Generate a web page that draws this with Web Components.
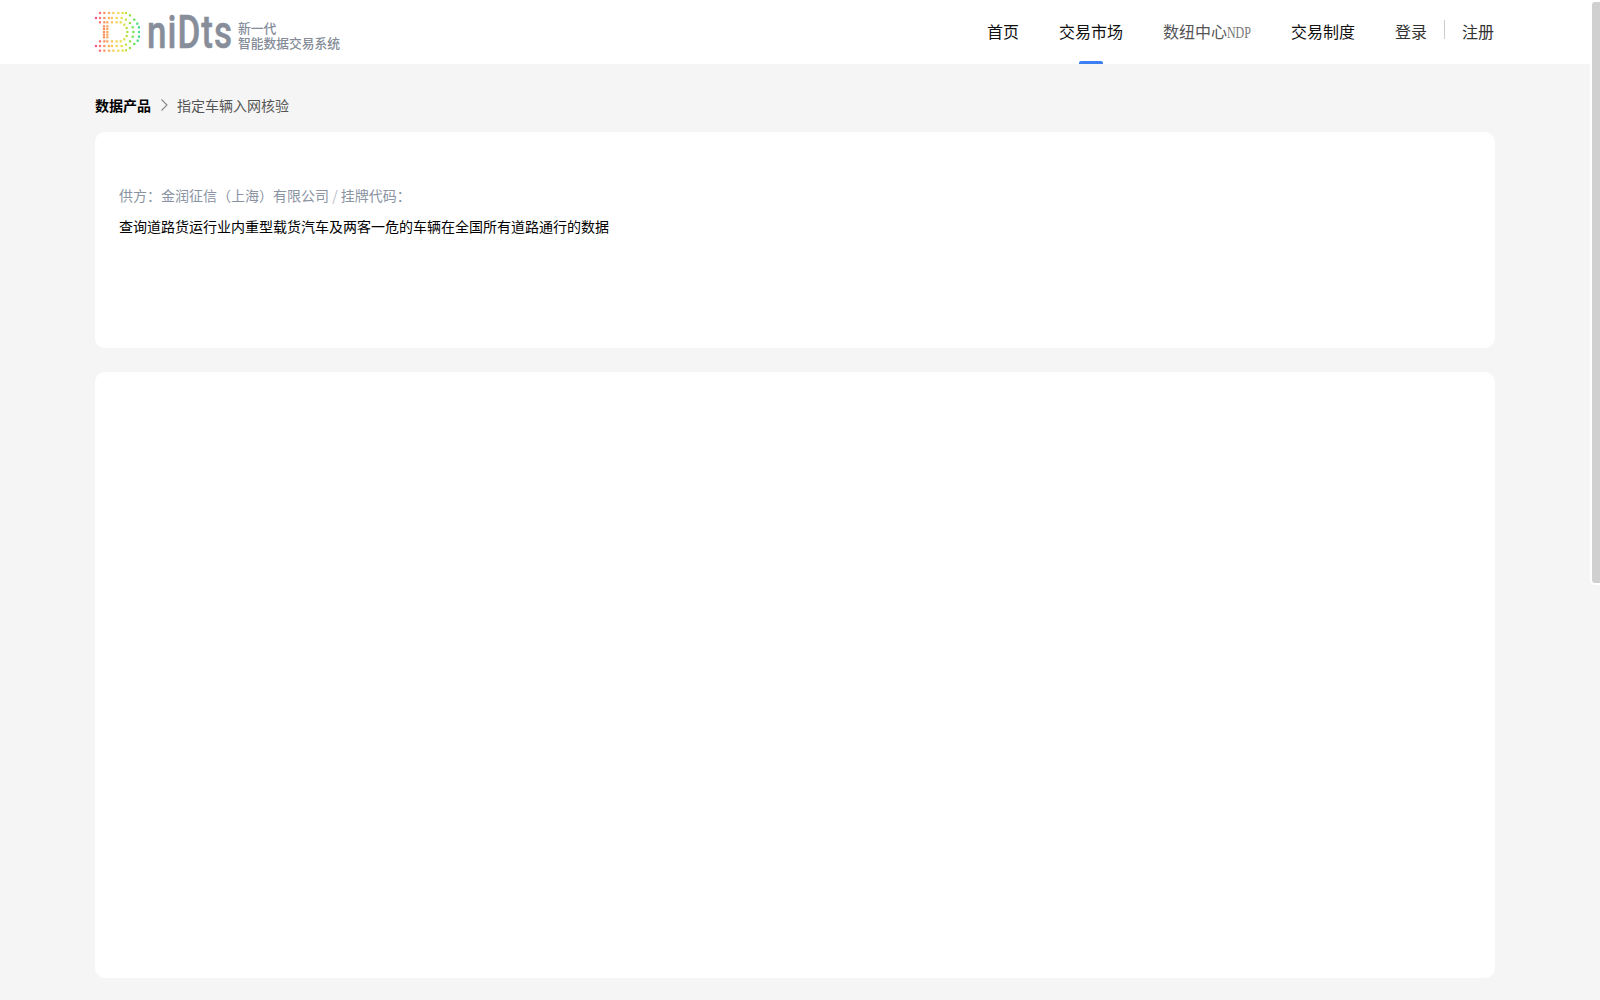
<!DOCTYPE html>
<html lang="zh-CN"><head><meta charset="utf-8"><title>指定车辆入网核验</title>
<style>
html,body{margin:0;padding:0;height:100%;overflow:hidden}
body{background:#f5f5f5;font-family:"Noto Sans CJK SC","Liberation Sans",sans-serif}
</style></head><body>
<app-page>
  <site-header slot="header"></site-header>
  <bread-crumb><span slot="root">数据产品</span>指定车辆入网核验</bread-crumb>
  <info-card style="height:216px">
    <product-summary></product-summary>
  </info-card>
  <info-card style="height:606px"></info-card>
</app-page>
<page-scrollbar></page-scrollbar>
<script>
const def=(name,html,extra={})=>{
  customElements.define(name,class extends HTMLElement{
    constructor(){super();this.attachShadow({mode:'open'}).innerHTML=html;extra.init&&extra.init(this.shadowRoot)}
  });
};
def('app-page',`<style>
:host{display:block;height:1000px;overflow:hidden}
main{width:1400px;margin:0 auto;display:flex;flex-direction:column}
.wrap{padding-right:10px}
</style><slot name="header"></slot><div class="wrap"><main><slot></slot></main></div>`);

def('dot-logo',`<style>:host{display:block;width:50px;height:48px}svg{display:block}</style><svg width="50" height="48" viewBox="0 0 50 48"></svg>`,{init(r){
  const P=[];
  const add=(a)=>a.forEach(p=>P.push(p));
  const row=(xs,y)=>xs.forEach(x=>P.push([x,y]));
  row([30,43,57,70,85,98],15);row([30,43,57,70,85,98],128);
  add([[108,15],[120,22],[133,35],[142,47],[147,58],[148,72],[147,86],[143,98],[133,108],[120,120],[108,127]]);
  row([18,30,43,57,66,80,95],30);row([18,30,43,57,66,80,95],114);
  add([[108,35],[120,45],[128,58],[130,72],[128,86],[120,100],[108,110]]);
  row([30,43,52,66,80,92],43);row([30,43,52,66,80,92],100);
  add([[103,50],[110,60],[112,72],[110,84],[103,94]]);
  [55,63,72,80,88].forEach(y=>{P.push([42,y]);P.push([52,y])});
  const stops=[[18,[244,84,140]],[42,[250,140,90]],[70,[250,205,90]],[100,[226,226,60]],[125,[130,226,70]],[150,[40,220,130]]];
  const col=x=>{for(let i=1;i<stops.length;i++){if(x<=stops[i][0]){const [a,ca]=stops[i-1],[b,cb]=stops[i],t=Math.max(0,(x-a)/(b-a));return `rgb(${ca.map((c,k)=>Math.round(c+(cb[k]-c)*t)).join(',')})`}}return 'rgb(40,220,130)'};
  r.querySelector('svg').innerHTML=P.map(([x,y])=>`<rect x="${(x/3-1.1).toFixed(2)}" y="${(y/3-1.1).toFixed(2)}" width="2.2" height="2.2" fill="${col(x)}"/>`).join('');
}});

def('site-logo',`<style>
:host{display:flex;align-items:center;height:64px}
dot-logo{margin:0 0 0 -5px;flex:none}
.word{flex:none;width:89px;margin-left:7px;font:500 35px/64px Roboto,sans-serif;letter-spacing:1px;color:#878e9a;-webkit-text-stroke:.4px #878e9a;white-space:nowrap;transform-origin:0 44px;transform:translateY(5px) scaleY(1.34)}
.sub{flex:none;color:#858c98;font-weight:500;font-size:12.75px;line-height:15px;margin:5px 0 0 2px;white-space:pre}
</style><dot-logo></dot-logo><div class="word">niDts</div><div class="sub">新一代
智能数据交易系统</div>`);

def('site-header',`<style>
:host{display:block;height:64px;background:#fff;padding-right:10px}
.in{width:1400px;height:64px;margin:0 auto;display:flex;justify-content:space-between}
nav{display:flex;gap:40px;height:64px}
a{position:relative;display:flex;align-items:center;font-size:16px;line-height:24px;color:#111;padding-bottom:3px;box-sizing:border-box;white-space:nowrap}
a.on::after{content:"";position:absolute;left:50%;margin-left:-12px;bottom:0;width:24px;height:3px;background:#3b7ff2;border-radius:2px 2px 0 0}
a.dim{color:#555}
.n{display:inline-block;font:12px/16px "Liberation Serif",serif;transform:scaleY(1.4);color:#777;margin-top:3px}
.auth{display:flex;align-items:center;height:64px;font-size:16px;color:#333;padding:0 1px 3px 0;box-sizing:border-box}
.sep{width:1px;height:19px;background:#ccc;margin:-2px 17px 0 17px}
</style><div class="in"><site-logo></site-logo><nav>
<a>首页</a><a class="on">交易市场</a><a class="dim">数纽中心<span class="n">NDP</span></a><a>交易制度</a>
<div class="auth"><span>登录</span><i class="sep"></i><span>注册</span></div></nav></div>`);

def('bread-crumb',`<style>
:host{display:flex;align-items:center;height:68px;padding-top:13px;box-sizing:border-box;font-size:14px;color:#555;white-space:nowrap}
svg{margin:0 8px 0 8px;flex:none}
::slotted(span){font-weight:700;color:#000}
</style><slot name="root"></slot><svg width="10" height="12" viewBox="0 0 10 12"><path d="M2.500.5 8 6l-5.500 5.500" fill="none" stroke="#888" stroke-width="1.100"/></svg><slot></slot>`);

def('info-card',`<style>
:host{display:block;box-sizing:border-box;background:#fff;border-radius:10px;margin-bottom:24px}
</style><slot></slot>`);

def('product-summary',`<style>
:host{display:block;padding:52px 24px 0;white-space:nowrap;font-size:14px}
.m{color:#8a93a2;line-height:22px;height:22px}
.m i{font-style:normal;color:#b8bec8}
.d{color:#000;margin-top:9px;line-height:22px}
</style><div class="m">供方：金润征信（上海）有限公司 <i>/</i> 挂牌代码：</div><div class="d">查询道路货运行业内重型载货汽车及两客一危的车辆在全国所有道路通行的数据</div>`);

def('page-scrollbar',`<style>
:host{position:fixed;top:0;right:0;width:8px;height:581px;background:#d0d0d0;border:2px solid #fff;border-right:0;border-radius:5px 0 0 5px/5px;box-sizing:content-box}
</style>`);
</script>
</body></html>
